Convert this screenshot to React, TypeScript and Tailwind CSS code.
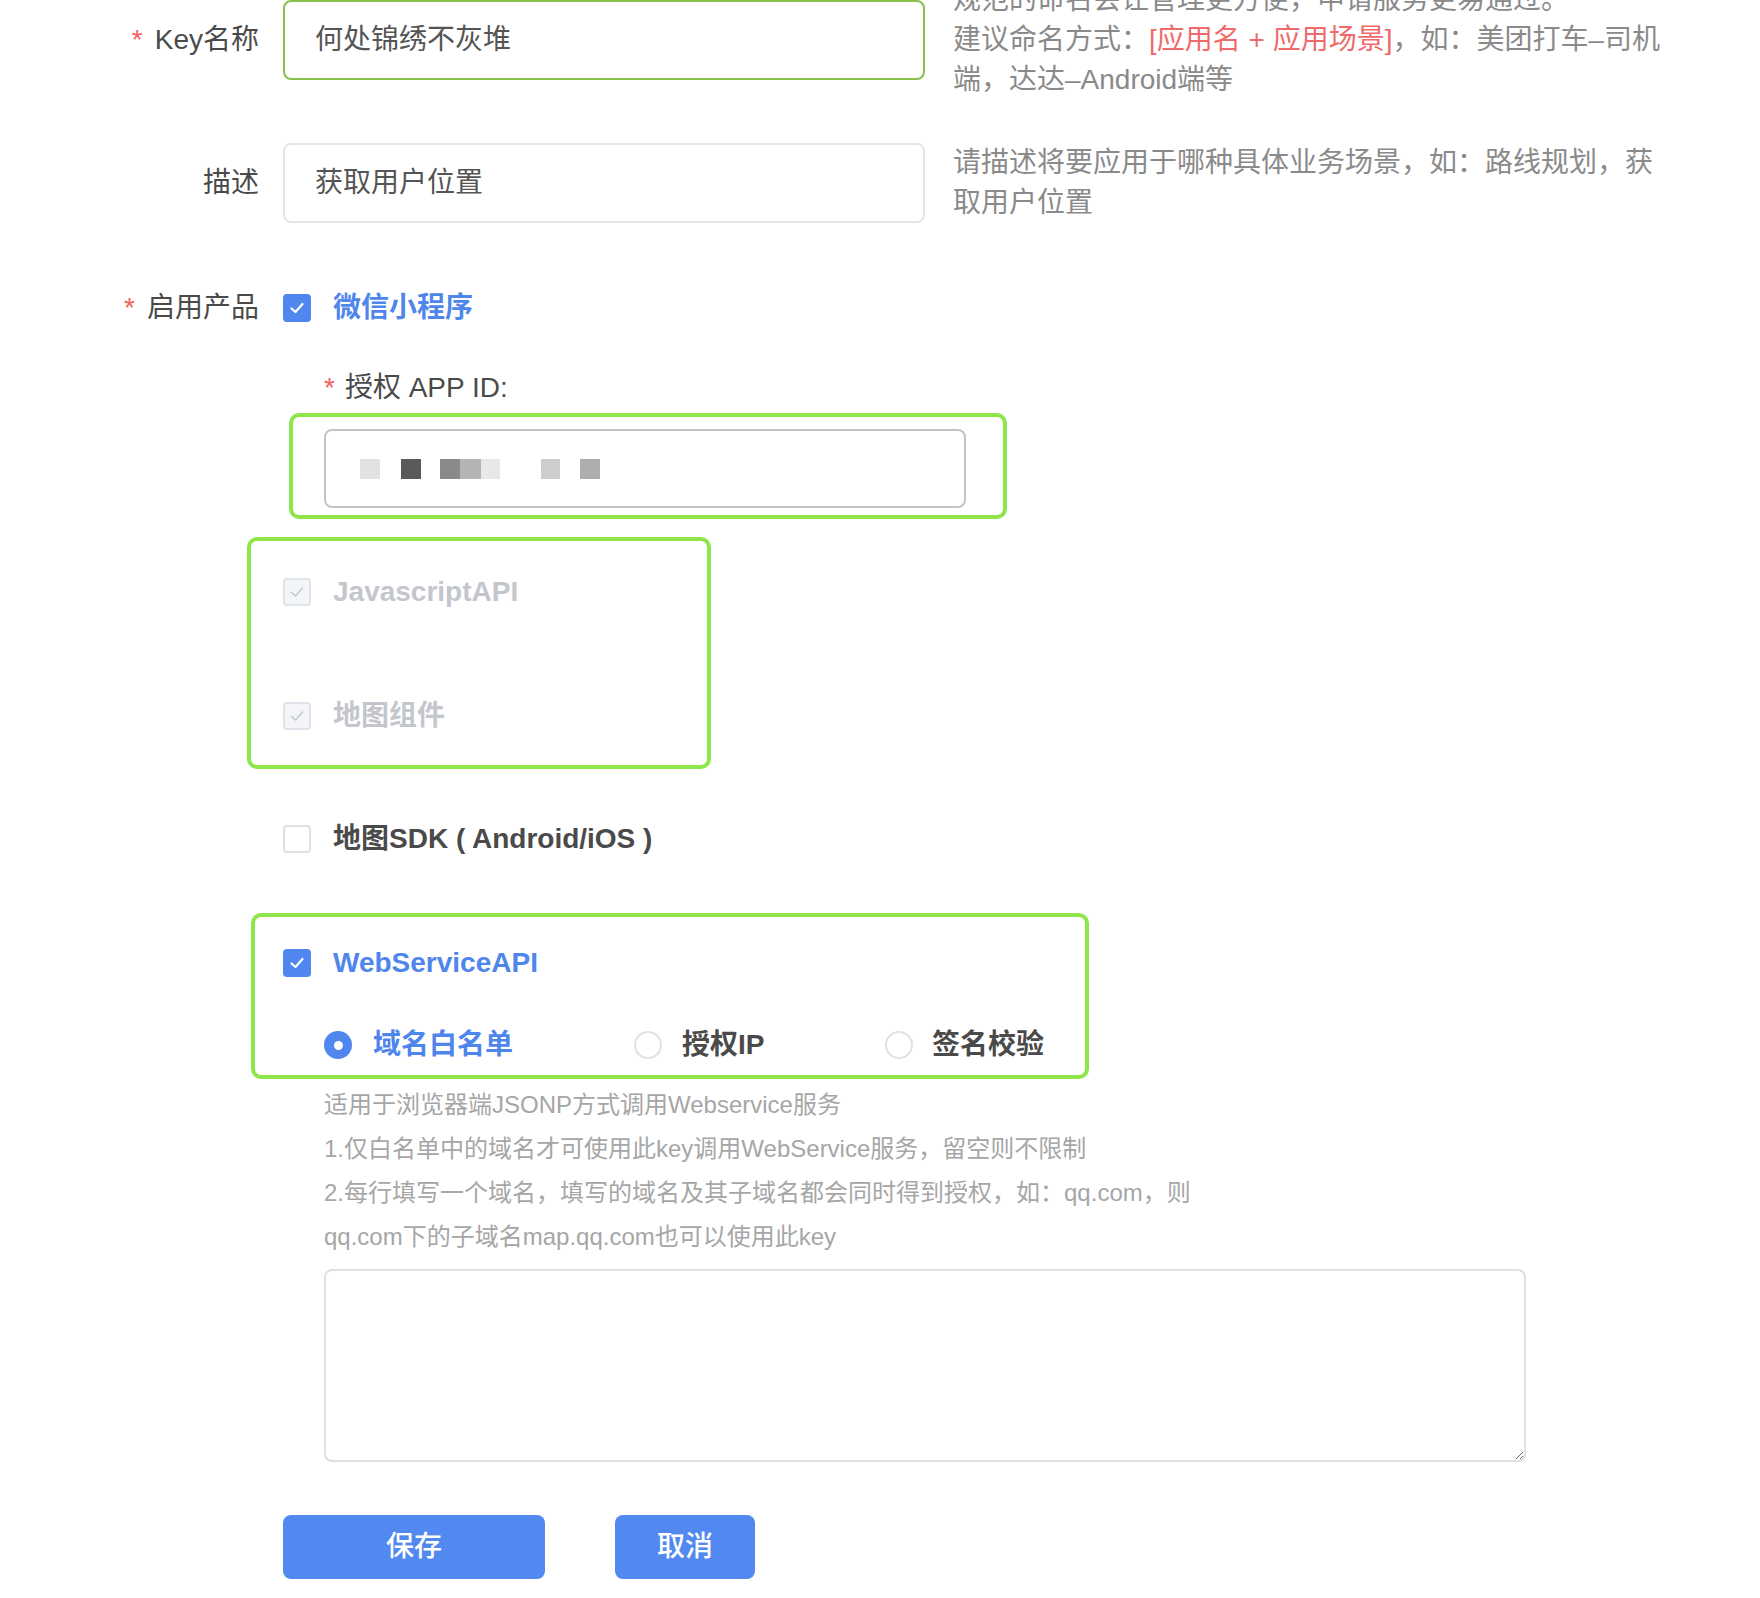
import React from "react";

const FONT = { fontFamily: "'Liberation Sans', 'Noto Sans CJK SC', sans-serif" };

function Check({ state }: { state: "on" | "off" | "disabled" }) {
  if (state === "on") {
    return (
      <span className="flex h-[28px] w-[28px] shrink-0 items-center justify-center rounded-[4px] bg-[#5087ef]">
        <svg width="18" height="18" viewBox="0 0 18 18" fill="none">
          <path d="M3.5 9.5 L7.5 13 L14.5 5" stroke="white" strokeWidth="2.2" strokeLinecap="round" strokeLinejoin="round" />
        </svg>
      </span>
    );
  }
  if (state === "disabled") {
    return (
      <span className="flex h-[28px] w-[28px] shrink-0 items-center justify-center rounded-[4px] border-2 border-[#dfe3ea] bg-[#f3f5f9]">
        <svg width="18" height="18" viewBox="0 0 18 18" fill="none">
          <path d="M3.5 9.5 L7.5 13 L14.5 5" stroke="#c3c8d0" strokeWidth="1.6" strokeLinecap="round" strokeLinejoin="round" />
        </svg>
      </span>
    );
  }
  return <span className="h-[28px] w-[28px] shrink-0 rounded-[4px] border-2 border-[#dfe1e6] bg-white" />;
}

function Radio({ on }: { on?: boolean }) {
  if (on)
    return (
      <span className="flex h-[28px] w-[28px] shrink-0 items-center justify-center rounded-full bg-[#5087ef]">
        <span className="h-[9px] w-[9px] rounded-full bg-white" />
      </span>
    );
  return <span className="h-[28px] w-[28px] shrink-0 rounded-full border-2 border-[#dfe1e6] bg-white" />;
}

const Star = ({ gap }: { gap: string }) => <span className={`text-[#f06060] ${gap}`}>*</span>;

export default function App() {
  return (
    <div style={FONT} className="relative h-[1598px] w-[1760px] overflow-hidden bg-white text-[28px] text-[#4a4a4a]">
      {/* Row 1 */}
      <div className="mt-[-20px] flex h-[120px] items-center">
        <div className="w-[259px] text-right whitespace-nowrap">
          <Star gap="mr-[12px]" />
          Key名称
        </div>
        <div className="ml-[24px] flex h-[80px] w-[642px] items-center rounded-[8px] border-2 border-[#86c04e] px-[30px] text-[#555]">
          何处锦绣不灰堆
        </div>
        <div className="ml-[28px] whitespace-nowrap leading-[40px] text-[#8a8a8a]">
          规范的命名会让管理更方便，申请服务更易通过。
          <br />
          建议命名方式：<span className="text-[#ef6a6a]">[应用名 + 应用场景]</span>，如：美团打车–司机
          <br />
          端，达达–Android端等
        </div>
      </div>

      {/* Row 2 */}
      <div className="mt-[43px] flex h-[80px] items-center">
        <div className="w-[259px] text-right">描述</div>
        <div className="ml-[24px] flex h-[80px] w-[642px] items-center rounded-[8px] border-2 border-[#e3e5e9] px-[30px] text-[#555]">
          获取用户位置
        </div>
        <div className="ml-[28px] whitespace-nowrap leading-[40px] text-[#8a8a8a]">
          请描述将要应用于哪种具体业务场景，如：路线规划，获
          <br />
          取用户位置
        </div>
      </div>

      {/* Row 3 */}
      <div className="mt-[65px] flex h-[40px] items-center">
        <div className="w-[259px] text-right">
          <Star gap="mr-[12px]" />
          启用产品
        </div>
        <div className="ml-[24px] flex items-center gap-[22px]">
          <Check state="on" />
          <span className="font-semibold text-[#4f86ec]">微信小程序</span>
        </div>
      </div>

      <div className="ml-[283px] flex flex-col">
        <div className="mt-[40px] flex h-[40px] items-center pl-[41px]">
          <Star gap="mr-[10px]" />
          授权 APP ID:
        </div>

        {/* Box 1 */}
        <div className="ml-[6px] mt-[5px] h-[106px] w-[718px] rounded-[10px] border-4 border-[#8fe64a] pl-[31px] pt-[12px]">
          <div className="flex h-[79px] w-[642px] items-center gap-0 rounded-[8px] border-2 border-[#c4c4c4] pl-[34px]">
            <span className="h-[20px] w-[20px] bg-[#e2e2e2]" />
            <span className="ml-[21px] h-[20px] w-[20px] bg-[#5a5a5c]" />
            <span className="ml-[19px] h-[20px] w-[20px] bg-[#8a8a8c]" />
            <span className="h-[20px] w-[21px] bg-[#b4b4b6]" />
            <span className="h-[20px] w-[19px] bg-[#e8e8ea]" />
            <span className="ml-[41px] h-[20px] w-[19px] bg-[#cdcdcf]" />
            <span className="ml-[20px] h-[20px] w-[20px] bg-[#aeaeb0]" />
          </div>
        </div>

        {/* Box 2 */}
        <div className="ml-[-36px] mt-[18px] flex h-[232px] w-[464px] flex-col rounded-[10px] border-4 border-[#8fe64a] pl-[32px] pt-[31px]">
          <div className="flex h-[40px] items-center gap-[22px]">
            <Check state="disabled" />
            <span className="font-semibold text-[#c3c6cc]">JavascriptAPI</span>
          </div>
          <div className="mt-[84px] flex h-[40px] items-center gap-[22px]">
            <Check state="disabled" />
            <span className="font-semibold text-[#c3c6cc]">地图组件</span>
          </div>
        </div>

        <div className="mt-[50px] flex h-[40px] items-center gap-[22px]">
          <Check state="off" />
          <span className="font-semibold text-[#4a4a4a]">地图SDK ( Android/iOS )</span>
        </div>

        {/* Box 3 */}
        <div className="ml-[-32px] mt-[54px] flex h-[166px] w-[838px] flex-col rounded-[10px] border-4 border-[#8fe64a] pl-[28px] pt-[26px]">
          <div className="flex h-[40px] items-center gap-[22px]">
            <Check state="on" />
            <span className="font-semibold text-[#4f86ec]">WebServiceAPI</span>
          </div>
          <div className="ml-[41px] mt-[42px] flex h-[40px] items-center">
            <div className="flex w-[310px] items-center gap-[21px]">
              <Radio on />
              <span className="font-semibold text-[#4f86ec]">域名白名单</span>
            </div>
            <div className="flex w-[251px] items-center gap-[20px]">
              <Radio />
              <span className="font-semibold text-[#4a4a4a]">授权IP</span>
            </div>
            <div className="flex items-center gap-[19px]">
              <Radio />
              <span className="font-semibold text-[#4a4a4a]">签名校验</span>
            </div>
          </div>
        </div>

        <div className="mt-[4px] pl-[41px] text-[24px] leading-[44px] text-[#a6a6a6]">
          <div>适用于浏览器端JSONP方式调用Webservice服务</div>
          <div>1.仅白名单中的域名才可使用此key调用WebService服务，留空则不限制</div>
          <div>2.每行填写一个域名，填写的域名及其子域名都会同时得到授权，如：qq.com，则</div>
          <div>qq.com下的子域名map.qq.com也可以使用此key</div>
        </div>

        <textarea
          className="ml-[41px] mt-[10px] h-[193px] w-[1202px] rounded-[8px] border-2 border-[#e0e0e0] outline-none"
          defaultValue=""
        />

        <div className="mt-[53px] flex h-[64px]">
          <button className="h-[64px] w-[262px] rounded-[8px] bg-[#5289f0] font-medium text-white">保存</button>
          <button className="ml-[70px] h-[64px] w-[140px] rounded-[8px] bg-[#5289f0] font-medium text-white">取消</button>
        </div>
      </div>
    </div>
  );
}
